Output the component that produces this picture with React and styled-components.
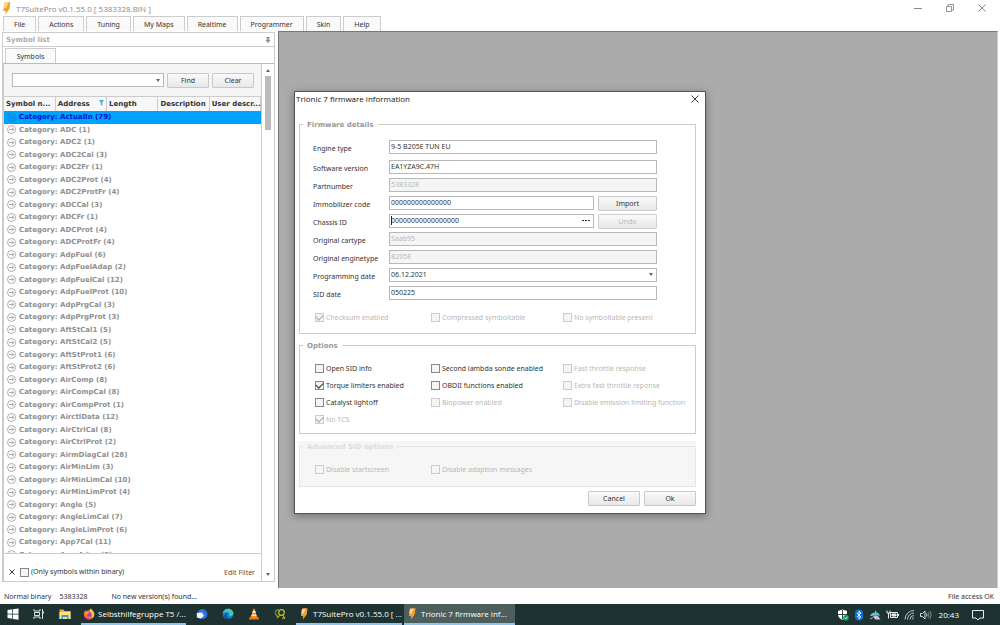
import React, { useState } from 'react'
import styled, { createGlobalStyle, css } from 'styled-components'

const MENU = ['File', 'Actions', 'Tuning', 'My Maps', 'Realtime', 'Programmer', 'Skin', 'Help']

const CATEGORIES = [
    ['ActualIn', 79], ['ADC', 1], ['ADC2', 1], ['ADC2Cal', 3], ['ADC2Fr', 1], ['ADC2Prot', 4],
    ['ADC2ProtFr', 4], ['ADCCal', 3], ['ADCFr', 1], ['ADCProt', 4], ['ADCProtFr', 4], ['AdpFuel', 6],
    ['AdpFuelAdap', 2], ['AdpFuelCal', 12], ['AdpFuelProt', 10], ['AdpPrgCal', 3], ['AdpPrgProt', 3],
    ['AftStCal1', 5], ['AftStCal2', 5], ['AftStProt1', 6], ['AftStProt2', 6], ['AirComp', 8],
    ['AirCompCal', 8], ['AirCompProt', 1], ['AirctlData', 12], ['AirCtrlCal', 8], ['AirCtrlProt', 2],
    ['AirmDiagCal', 28], ['AirMinLim', 3], ['AirMinLimCal', 10], ['AirMinLimProt', 4], ['Angle', 5],
    ['AngleLimCal', 7], ['AngleLimProt', 6], ['App7Cal', 11], ['AreaAdap', 5],
]

function Bolt({ size }) {
    return (
        <svg width={size} height={size} viewBox="0 0 12 12">
            <path d="M4 0.8L9.500 0.300 8.800 6.200 4.800 11.800 5.300 8.300 3 8z" fill="#f0a030" />
            <path d="M4 0.800L8 0.400 5.500 5.500 3.300 6z" fill="#ffd28a" />
        </svg>
    )
}

function Check({ label, id, checked, disabled }) {
    const [on, setOn] = useState(!!checked)
    return (
        <CheckLabel htmlFor={id} $off={disabled}>
            <Box id={id} type="checkbox" checked={on} disabled={disabled} onChange={(e) => setOn(e.target.checked)} />
            {label}
        </CheckLabel>
    )
}

function Field({ id, label, value, disabled, children }) {
    return (
        <FieldRow>
            <FieldLabel htmlFor={id}>{label}</FieldLabel>
            <Control>
                {value !== undefined && <TextBox id={id} defaultValue={value} disabled={disabled} />}
                {children}
            </Control>
        </FieldRow>
    )
}

function SymbolPanel() {
    const [selected, setSelected] = useState(0)
    return (
        <Panel>
            <PanelCaption>
                Symbol list
                <svg width="6" height="6" viewBox="0 0 7 7" stroke="#666" fill="none">
                    <path d="M1 4.5h5M2 0.5h3M2.5 0.5v4M4.5 0.5v4M3.5 4.5V7" />
                </svg>
            </PanelCaption>
            <PanelTabs>
                <PanelTab>Symbols</PanelTab>
            </PanelTabs>
            <PanelBody>
                <GridArea>
                    <SearchBar>
                        <Combo>
                            <input aria-label="Search symbols" />
                            <Arrow />
                        </Combo>
                        <Button $w={42}>Find</Button>
                        <Button $w={42}>Clear</Button>
                    </SearchBar>
                    <TableWrap>
                        <Table>
                            <thead>
                                <tr>
                                    <th>Symbol n...</th>
                                    <th>
                                        <HeadCell>
                                            Address
                                            <svg width="5" height="6" viewBox="0 0 5 6"><path d="M0 0h5L3.2 2.5V6L1.8 5V2.5z" fill="#3bb0d6" /></svg>
                                        </HeadCell>
                                    </th>
                                    <th>Length</th>
                                    <th>Description</th>
                                    <th>User descr...</th>
                                </tr>
                            </thead>
                            <tbody>
                                {CATEGORIES.map(([name, count], i) => (
                                    <Row key={name} $active={i === selected} onClick={() => setSelected(i)}>
                                        <td colSpan={5}>
                                            <RowText>
                                                <svg width="9" height="9" viewBox="0 0 9 9" fill="none" stroke={i === selected ? '#1583c8' : '#999'} strokeWidth="0.8">
                                                    <circle cx="4.5" cy="4.5" r="4" />
                                                    <path d="M2 4.5h4.6M4.8 2.6l1.9 1.9-1.9 1.9" />
                                                </svg>
                                                Category: {name} ({count})
                                            </RowText>
                                        </td>
                                    </Row>
                                ))}
                            </tbody>
                        </Table>
                    </TableWrap>
                    <FilterBar>
                        <IconButton aria-label="Remove filter">
                            <svg width="6" height="6" viewBox="0 0 6 6" stroke="#333" strokeWidth="1"><path d="M0.5 0.5l5 5M5.5 0.5l-5 5" /></svg>
                        </IconButton>
                        <Check id="filter" label="(Only symbols within binary)" />
                        <EditFilter href="#filter">Edit Filter</EditFilter>
                    </FilterBar>
                </GridArea>
                <ScrollBar>
                    <Arrow $up />
                    <Thumb />
                    <Arrow />
                </ScrollBar>
            </PanelBody>
        </Panel>
    )
}

function FirmwareDialog() {
    return (
        <Dialog role="dialog" aria-label="Trionic 7 firmware information">
            <DialogTitle>
                Trionic 7 firmware information
                <IconButton aria-label="Close">
                    <svg width="8" height="8" viewBox="0 0 8 8" stroke="#222" strokeWidth="0.9"><path d="M0.5 0.5l7 7M7.5 0.5l-7 7" /></svg>
                </IconButton>
            </DialogTitle>
            <Group $h={214}>
                <legend>Firmware details</legend>
                <Fields>
                    <Field id="engine" label="Engine type" value="9-5 B205E TUN EU" />
                    <Field id="software" label="Software version" value="EA1YZA9C.47H" />
                    <Field id="part" label="Partnumber" value="5383328" disabled />
                    <Field id="immo" label="Immobilizer code" value="000000000000000">
                        <Button $w={59}>Import</Button>
                    </Field>
                    <Field id="chassis" label="Chassis ID">
                        <Combo>
                            <input id="chassis" defaultValue="00000000000000000" />
                            <TextCursor />
                            <IconButton aria-label="Browse">
                                <svg width="8" height="1" viewBox="0 0 8 1" fill="#333"><path d="M0 0h2v1H0zM3 0h2v1H3zM6 0h2v1H6z" /></svg>
                            </IconButton>
                        </Combo>
                        <Button $w={59} disabled>Undo</Button>
                    </Field>
                    <Field id="cartype" label="Original cartype" value="Saab95" disabled />
                    <Field id="enginetype" label="Original enginetype" value="B205E" disabled />
                    <Field id="progdate" label="Programming date">
                        <Combo>
                            <select id="progdate"><option>06.12.2021</option></select>
                            <Arrow />
                        </Combo>
                    </Field>
                    <Field id="siddate" label="SID date" value="050225" />
                </Fields>
                <Checks>
                    <Check id="checksum" label="Checksum enabled" checked disabled />
                    <Check id="compressed" label="Compressed symboltable" disabled />
                    <Check id="nosymbols" label="No symboltable present" disabled />
                </Checks>
            </Group>
            <Group $h={93}>
                <legend>Options</legend>
                <Checks>
                    <Check id="opensid" label="Open SID info" />
                    <Check id="lambda" label="Second lambda sonde enabled" />
                    <Check id="fast" label="Fast throttle response" disabled />
                    <Check id="torque" label="Torque limiters enabled" checked />
                    <Check id="obd" label="OBDII functions enabled" />
                    <Check id="extrafast" label="Extra fast throttle reponse" disabled />
                    <Check id="catalyst" label="Catalyst lightoff" />
                    <Check id="biopower" label="Biopower enabled" disabled />
                    <Check id="emission" label="Disable emission limiting function" disabled />
                    <Check id="notcs" label="No TCS" checked disabled />
                </Checks>
            </Group>
            <Shade>
                <Group $h={45} $faded>
                    <legend>Advanced SID options</legend>
                    <Checks>
                        <Check id="startscreen" label="Disable startscreen" disabled />
                        <Check id="adaption" label="Disable adaption messages" disabled />
                    </Checks>
                </Group>
            </Shade>
            <Footer>
                <Button $w={52}>Cancel</Button>
                <Button $w={52}>Ok</Button>
            </Footer>
        </Dialog>
    )
}

function TaskBar() {
    return (
        <Bar>
            <Task aria-label="Start">
                <svg width="12" height="12" viewBox="0 0 12 12" fill="#fff"><path d="M0.5 2l4.8-.7v4.4H.5zM6 1.2l5.5-.8v5.3H6zM.5 6.4h4.8v4.4L.5 10.100zM6 6.400h5.500v5.300L6 10.900z" /></svg>
            </Task>
            <Task aria-label="Task view">
                <svg width="12" height="12" viewBox="0 0 12 12" fill="none" stroke="#dde3e2"><path d="M1 1v2h6V1M1 11V9h6v2M1.500 4.500h5v3h-5zM9.500 1v10" /><path d="M9 4.500h2" strokeWidth="2" /></svg>
            </Task>
            <Task aria-label="File Explorer">
                <svg width="12" height="12" viewBox="0 0 12 12">
                    <path d="M0.500 1.500h4l1 1.500h6v8H.5z" fill="#e9b13b" />
                    <path d="M0.500 4h11v7H.5z" fill="#ffdf7e" />
                    <path d="M2.500 7h7v4H8V9H4v2H2.500z" fill="#3a9bdc" />
                </svg>
            </Task>
            <Running>
                <Task $wide={105}>
                    <svg width="12" height="12" viewBox="0 0 12 12">
                        <path d="M6 11.500A5.200 5.200 0 0 1 .8 6.300C.8 4.500 1.500 3.300 2.400 2l.4 1.400C4 2.300 5.500 2.600 6.500 2.800 6.600 1.800 7.200 1 8 .5c.3 1.500 3.300 2.500 3.300 5.800A5.200 5.200 0 0 1 6 11.500z" fill="#ff7a2a" />
                        <path d="M8 .5c.3 1.500 3.300 2.500 3.300 5.800A5 5 0 0 1 9 10.500C10 7 9 5 6.500 2.800 6.600 1.800 7.200 1 8 .5z" fill="#ffc837" />
                        <path d="M.8 6.300C.8 9 3 11.500 6 11.500c1 0 2-.3 2.800-.8C5 10.500 2 9 .8 6.300z" fill="#e8336d" />
                        <circle cx="6.200" cy="6.500" r="2.300" fill="#8a4bd8" />
                        <path d="M3 4.600c1.300-.6 2.500-.2 3.300.5-1 .1-1.500.6-1.800 1.400C3.600 6.500 3 5.600 3 4.600z" fill="#ffb12f" />
                    </svg>
                    <span>Selbsthilfegruppe T5 /...</span>
                </Task>
            </Running>
            <Task aria-label="Thunderbird">
                <svg width="12" height="12" viewBox="0 0 12 12">
                    <circle cx="6.500" cy="6" r="5" fill="#1d5fc4" />
                    <path d="M.5 6.500C2 2.500 5 .8 9 1.500 7 2 8.500 3.500 11.500 6c-1 4-3.500 5.300-6 5C3 10.500 1.500 9 .5 6.500z" fill="#2f74d8" />
                    <path d="M.8 5l5.200-.5 2 3.500-3.500 2.500L.8 9.500z" fill="#f2f6fb" />
                </svg>
            </Task>
            <Task aria-label="Edge">
                <svg width="12" height="12" viewBox="0 0 12 12">
                    <circle cx="6" cy="6" r="5.300" fill="#1b7fd4" />
                    <path d="M.8 5.500C1.200 2.500 3.500.7 6.200.7c3.200 0 5.200 2.400 5.200 4.600 0 1.700-1.300 2.700-3 2.700-1.200 0-1.600-.5-1.200-1.200C7.800 5.300 6.500 4 4.600 4 2.800 4 1.400 4.600.8 5.500z" fill="#46c9a0" />
                    <path d="M.8 5.500C1.200 2.500 3.500.7 6.200.7c1 0 1.800.2 2.500.6C5 1.300 2 3 .8 5.500z" fill="#35b8cf" />
                    <path d="M4.500 6.500c-.3 2.500 1.800 4 4.700 3.200C7 12 2.800 11.500 2.300 8.500 2.100 6.500 3.500 5 5 5c-.3.400-.5 1-.5 1.500z" fill="#0f4f9c" />
                </svg>
            </Task>
            <Task aria-label="VLC">
                <svg width="12" height="12" viewBox="0 0 12 12">
                    <path d="M2 8.500h8l1.200 3H.8z" fill="#e8751a" />
                    <path d="M5.300.8h1.400L9 9.500c-1.500 1-4.500 1-6 0z" fill="#f58a1f" />
                    <path d="M4.700 3h2.600l.5 1.800H4.200zM3.700 6.500h4.600l.4 1.500H3.300z" fill="#f4f4f4" />
                </svg>
            </Task>
            <Task aria-label="Search tool">
                <svg width="12" height="12" viewBox="0 0 12 12" fill="none">
                    <path d="M5 2C2.500 1 1 3 1.500 5.500S4 9 5.500 7.500" stroke="#4f9038" strokeWidth="1.400" />
                    <circle cx="7.500" cy="4.500" r="2.800" stroke="#d8c22e" strokeWidth="1.200" />
                    <path d="M9 7l1.800 4M8 10.500l3-1M3 10l2-2" stroke="#b9b12d" strokeWidth="1.200" />
                </svg>
            </Task>
            <Running>
                <Task $wide={106}>
                    <Bolt size={12} />
                    <span>T7SuitePro v0.1.55.0 [ ...</span>
                </Task>
                <Task $wide={111} $active>
                    <Bolt size={12} />
                    <span>Trionic 7 firmware inf...</span>
                </Task>
            </Running>
            <Tray>
                <svg width="12" height="12" viewBox="0 0 12 12">
                    <path d="M5.500.5l4.500 1.500v3.500c0 2.500-2 4.500-4.500 5.500C3 10 1 8 1 5.500V2z" fill="#fff" />
                    <path d="M5.500 1v9.500M1 5.500h9" stroke="#1e3331" strokeWidth="0.900" />
                    <circle cx="9" cy="8.800" r="2.800" fill="#14a05a" />
                    <path d="M7.700 8.800l1 1 1.600-1.900" stroke="#fff" fill="none" strokeWidth="0.800" />
                </svg>
                <svg width="10" height="12" viewBox="0 0 10 12">
                    <rect x="1" y="0.500" width="8" height="11" rx="4" fill="#0a74e0" />
                    <path d="M3 4l4 4-2 1.800V2.200L7 4 3 8" stroke="#fff" fill="none" strokeWidth="0.900" />
                </svg>
                <svg width="12" height="12" viewBox="0 0 12 12">
                    <path d="M1 7c1-3 3-3.500 5-3.500l0-2.500 2 2.500c1.500.7 2.500 1.500 3 3z" fill="#5fc0cf" />
                    <path d="M4 7h5l2.500 3.500H6z" fill="#c3cccb" />
                    <path d="M1 10l3-1.500" stroke="#aab6b5" />
                </svg>
                <svg width="13" height="12" viewBox="0 0 13 12" fill="none" stroke="#e8eded">
                    <path d="M1 1.500v2.500h3V1.500M2.500 4v5.500" />
                    <path d="M4.500 3.500h7v5h-7z" />
                    <path d="M6 5h4v2H6zM12.500 5v2" fill="#e8eded" />
                </svg>
                <svg width="11" height="12" viewBox="0 0 11 12" fill="none" stroke="#c8d1d0" strokeWidth="0.900">
                    <path d="M1 10.500A9 9 0 0 1 10 1.500M3.500 10.500A6.500 6.500 0 0 1 10 4M6 10.500a4 4 0 0 1 4-4M8.300 10.500A1.700 1.700 0 0 1 10 8.800" />
                </svg>
                <svg width="12" height="12" viewBox="0 0 12 12" fill="none" stroke="#e8eded" strokeWidth="0.900">
                    <path d="M.5 4.500h2l2.500-2.500v8L2.500 7.500h-2zM6.500 4.500c.6 1 .6 2 0 3" />
                    <path d="M8 3.200c1.200 1.800 1.200 3.800 0 5.600M9.700 2c1.800 2.500 1.800 5.500 0 8" stroke="#8b9997" />
                </svg>
                <time>20:43</time>
                <svg width="12" height="12" viewBox="0 0 12 12" fill="none" stroke="#e8eded"><path d="M.5 1.500h11v7.500H8l-2 2-2-2H.5z" /></svg>
            </Tray>
        </Bar>
    )
}

function App() {
    return (
        <Screen>
            <GlobalStyle />
            <Desktop>
                <TitleBar>
                    <Bolt size={13} />
                    <h1>T7SuitePro v0.1.55.0 [ 5383328.BIN ]</h1>
                    <WindowButtons>
                        <IconButton aria-label="Minimize">
                            <svg width="8" height="8" viewBox="0 0 8 8" stroke="#888"><path d="M0 4.500h8" /></svg>
                        </IconButton>
                        <IconButton aria-label="Restore">
                            <svg width="8" height="8" viewBox="0 0 8 8" stroke="#888" fill="none"><path d="M0.500 2.500h5v5h-5zM2 2.500v-2h5.500V6h-2" strokeWidth="0.900" /></svg>
                        </IconButton>
                        <IconButton aria-label="Close window">
                            <svg width="8" height="8" viewBox="0 0 8 8" stroke="#888"><path d="M0.500 0.500l7 7M7.500 0.500l-7 7" /></svg>
                        </IconButton>
                    </WindowButtons>
                </TitleBar>
                <MenuBar>
                    {MENU.map((item) => <MenuItem key={item}>{item}</MenuItem>)}
                </MenuBar>
                <Workspace>
                    <SymbolPanel />
                    <Canvas />
                </Workspace>
                <StatusBar>
                    <span>Normal binary</span>
                    <span>5383328</span>
                    <Message>No new version(s) found...</Message>
                    <span>File access OK</span>
                </StatusBar>
                <Overlay>
                    <FirmwareDialog />
                </Overlay>
            </Desktop>
            <TaskBar />
        </Screen>
    )
}

export default App

const GlobalStyle = createGlobalStyle`
    * {
        box-sizing: border-box;
    }
    body {
        margin: 0;
        background: #fff;
    }
    body, button, input, select {
        font-family: "Noto Sans", "Open Sans", sans-serif;
        font-size: 7px;
        color: #333;
    }
    svg {
        display: block;
        flex: none;
    }
`
const Screen = styled.div`
    height: 100vh;
    display: flex;
    flex-direction: column;
    overflow: hidden;
`
const Desktop = styled.div`
    flex: 1;
    min-height: 0;
    position: relative;
    display: flex;
    flex-direction: column;
`
const TitleBar = styled.header`
    height: 16px;
    display: flex;
    align-items: center;
    gap: 3px;
    flex: none;
    h1 {
        margin: 0;
        font: 8px "Open Sans", sans-serif;
        color: #888;
    }
`
const WindowButtons = styled.div`
    margin-left: auto;
    padding-right: 14px;
    display: flex;
    gap: 24px;
`
const IconButton = styled.button`
    border: none;
    padding: 0;
    background: none;
    display: flex;
    align-items: center;
    cursor: pointer;
`
const MenuBar = styled.nav`
    height: 15px;
    flex: none;
    display: flex;
    gap: 2px;
    padding-left: 3px;
`
const MenuItem = styled.button`
    border: 1px solid #ccc;
    border-bottom: none;
    background: #fafafa;
    padding: 0 10px;
    &:hover {
        background: #fff;
    }
`
const Workspace = styled.main`
    flex: 1;
    min-height: 0;
    display: grid;
    grid-template-columns: 275px 1fr;
    gap: 3px;
    padding-right: 2px;
`
const Canvas = styled.section`
    background: #ababab;
    border: 1px solid #777;
    border-right-color: #ccc;
    border-bottom: none;
`
const Panel = styled.aside`
    margin: 1px 0 6px 2px;
    border: 1px solid #ccc;
    display: flex;
    flex-direction: column;
    min-height: 0;
`
const PanelCaption = styled.header`
    height: 14px;
    flex: none;
    display: flex;
    align-items: center;
    justify-content: space-between;
    padding: 0 3px;
    border-bottom: 1px solid #ccc;
    font: bold 7px "DejaVu Sans", sans-serif;
    color: #aaa;
`
const PanelTabs = styled.div`
    height: 16px;
    flex: none;
    padding: 1px 0 0 2px;
    display: flex;
`
const PanelTab = styled.button`
    width: 51px;
    border: 1px solid #ccc;
    border-bottom: none;
    background: #fafafa;
`
const PanelBody = styled.div`
    flex: 1;
    min-height: 0;
    display: flex;
    border-top: 1px solid #bbb;
`
const GridArea = styled.div`
    flex: 1;
    min-width: 0;
    display: flex;
    flex-direction: column;
    border-right: 1px solid #ccc;
    border-left: 1px solid #ccc;
`
const SearchBar = styled.form.attrs({ onSubmit: (e) => e.preventDefault() })`
    height: 32px;
    flex: none;
    display: flex;
    align-items: center;
    gap: 3px;
    padding: 0 7px 0 8px;
    background: #f5f5f5;
`
const Combo = styled.div`
    position: relative;
    flex: 1;
    min-width: 0;
    height: 14px;
    display: flex;
    align-items: center;
    padding-right: 3px;
    border: 1px solid #b8b8b8;
    background: #fff;
    input, select {
        appearance: none;
        flex: 1;
        min-width: 0;
        height: 12px;
        border: none;
        outline: none;
        padding: 0 1px;
        background: transparent;
    }
`
const Arrow = styled.i`
    width: 4px;
    flex: none;
    border: 2px solid transparent;
    border-top: 3px solid #666;
    border-bottom: none;
    ${({ $up }) => $up && css`
        border-top: none;
        border-bottom: 3px solid #666;
    `}
`
const TextCursor = styled.i`
    position: absolute;
    left: 1px;
    top: 1px;
    width: 1px;
    height: 9px;
    background: #222;
`
const Button = styled.button`
    width: ${({ $w }) => $w}px;
    height: 15px;
    flex: none;
    padding: 0;
    border: 1px solid #c8c8c8;
    border-radius: 1px;
    background: linear-gradient(#fafafa, #e8e8e8);
    &:disabled {
        color: #b8b8b8;
        border-color: #d0d0d0;
    }
`
const TableWrap = styled.div`
    flex: 1;
    min-height: 0;
    overflow: hidden;
    border-bottom: 1px solid #ccc;
`
const Table = styled.table`
    width: 100%;
    table-layout: fixed;
    border-collapse: collapse;
    font: bold 7px "DejaVu Sans", sans-serif;
    th {
        height: 14px;
        padding: 0 0 0 2px;
        text-align: left;
        white-space: nowrap;
        background: #f7f7f7;
        border: 1px solid #ccc;
        border-left: none;
        border-bottom: none;
    }
    td {
        padding: 0;
    }
`
const HeadCell = styled.div`
    display: flex;
    justify-content: space-between;
    padding-right: 2px;
`
const Row = styled.tr`
    height: 12px;
    color: ${({ $active }) => ($active ? '#0010c8' : '#909090')};
    background: ${({ $active }) => ($active ? '#00a2ff' : '#fff')};
    &:nth-child(odd) {
        height: 13px;
    }
`
const RowText = styled.div`
    display: flex;
    align-items: center;
    gap: 3px;
    padding-left: 3px;
    line-height: 12px;
    white-space: pre;
`
const FilterBar = styled.div`
    height: 27px;
    flex: none;
    display: flex;
    align-items: center;
    gap: 5px;
    padding: 9px 6px 0 5px;
`
const EditFilter = styled.a`
    margin-left: auto;
    color: #555;
    text-decoration: none;
`
const ScrollBar = styled.div`
    width: 12px;
    flex: none;
    display: flex;
    flex-direction: column;
    align-items: center;
    gap: 4px;
    padding: 5px 0;
    i:last-child {
        margin-top: auto;
    }
`
const Thumb = styled.div`
    width: 6px;
    height: 54px;
    background: #bbb;
`
const StatusBar = styled.footer`
    height: 16px;
    flex: none;
    display: flex;
    align-items: center;
    gap: 8px;
    padding: 0 6px 0 4px;
`
const Message = styled.span`
    flex: 1;
    padding-left: 16px;
`
const Overlay = styled.div`
    position: absolute;
    inset: 0;
    display: grid;
    place-items: center;
    pointer-events: none;
`
const Dialog = styled.section`
    width: min(412px, 100%);
    padding: 0 9px 7px 4px;
    background: #fff;
    border: 1px solid #555;
    box-shadow: 0 2px 8px rgba(0, 0, 0, 0.35);
    pointer-events: auto;
`
const DialogTitle = styled.header`
    height: 28px;
    margin: 0 -3px;
    padding-bottom: 14px;
    display: flex;
    align-items: center;
    justify-content: space-between;
    font: 8px "Open Sans", sans-serif;
    color: #111;
`
const Group = styled.fieldset`
    height: ${({ $h }) => $h}px;
    margin: 0 0 7px;
    padding: 0;
    min-width: 0;
    border: 1px solid #ccc;
    legend {
        margin-left: 3px;
        padding: 0 4px;
        font: bold 7px "DejaVu Sans", sans-serif;
        line-height: 10px;
        color: #999;
    }
    ${({ $faded }) => $faded && css`
        margin: 0;
        border-color: #e6e6e6;
        legend {
            color: #ddd;
            background: #f6f6f6;
        }
    `}
`
const Shade = styled.div`
    padding-top: 1px;
    background: #f6f6f6;
`
const Fields = styled.div`
    display: grid;
    gap: 4px;
    padding: 10px 38px 12px 13px;
`
const FieldRow = styled.div`
    display: grid;
    grid-template-columns: 76px 1fr;
    &:first-child {
        margin-bottom: 2px;
    }
`
const FieldLabel = styled.label`
    line-height: 10px;
    padding-top: 4px;
    white-space: nowrap;
`
const Control = styled.div`
    height: 14px;
    display: flex;
    gap: 4px;
`
const TextBox = styled.input`
    flex: 1;
    min-width: 0;
    height: 14px;
    padding: 0 1px;
    border: 1px solid #b8b8b8;
    background: #fff;
    &:disabled {
        color: #b8b8b8;
        background: #f5f5f5;
    }
`
const Checks = styled.div`
    display: grid;
    grid-template-columns: 116px 132px 1fr;
    row-gap: 5px;
    padding: 0 0 0 15px;
    legend + & {
        padding-top: 12px;
    }
`
const CheckLabel = styled.label`
    display: flex;
    align-items: center;
    gap: 2px;
    line-height: 12px;
    white-space: nowrap;
    color: ${({ $off }) => ($off ? '#b8b8b8' : '#333')};
`
const Box = styled.input`
    appearance: none;
    width: 9px;
    height: 9px;
    flex: none;
    margin: 0;
    display: grid;
    place-items: center;
    border: 1px solid #888;
    background: #f5f5f5;
    &:disabled {
        border-color: #ccc;
    }
    &:checked::after {
        content: '';
        width: 6px;
        height: 4px;
        margin-bottom: 2px;
        border: solid #333;
        border-width: 0 0 1px 1px;
        transform: rotate(-45deg);
    }
    &:disabled:checked::after {
        border-color: #aaa;
    }
`
const Footer = styled.footer`
    display: flex;
    justify-content: flex-end;
    gap: 4px;
    padding-top: 4px;
`
const Bar = styled.nav`
    height: 21px;
    flex: none;
    display: flex;
    background: #1e3331;
    color: #fff;
`
const Running = styled.div`
    display: flex;
    gap: 2px;
    margin: 0 3px;
`
const Task = styled.button`
    width: ${({ $wide }) => $wide || 26}px;
    border: none;
    border-bottom: 2px solid ${({ $wide }) => ($wide ? '#8fc4ee' : 'transparent')};
    padding: 0 2px;
    display: flex;
    align-items: center;
    justify-content: ${({ $wide }) => ($wide ? 'flex-start' : 'center')};
    gap: 3px;
    color: #fff;
    white-space: nowrap;
    background: ${({ $active }) => ($active ? '#4d5f5d' : 'transparent')};
    font: 8px "Open Sans", sans-serif;
`
const Tray = styled.div`
    margin-left: auto;
    padding-right: 16px;
    display: flex;
    align-items: center;
    gap: 5px;
    time {
        padding: 0 8px 0 2px;
        font: 8px "Open Sans", sans-serif;
    }
`
